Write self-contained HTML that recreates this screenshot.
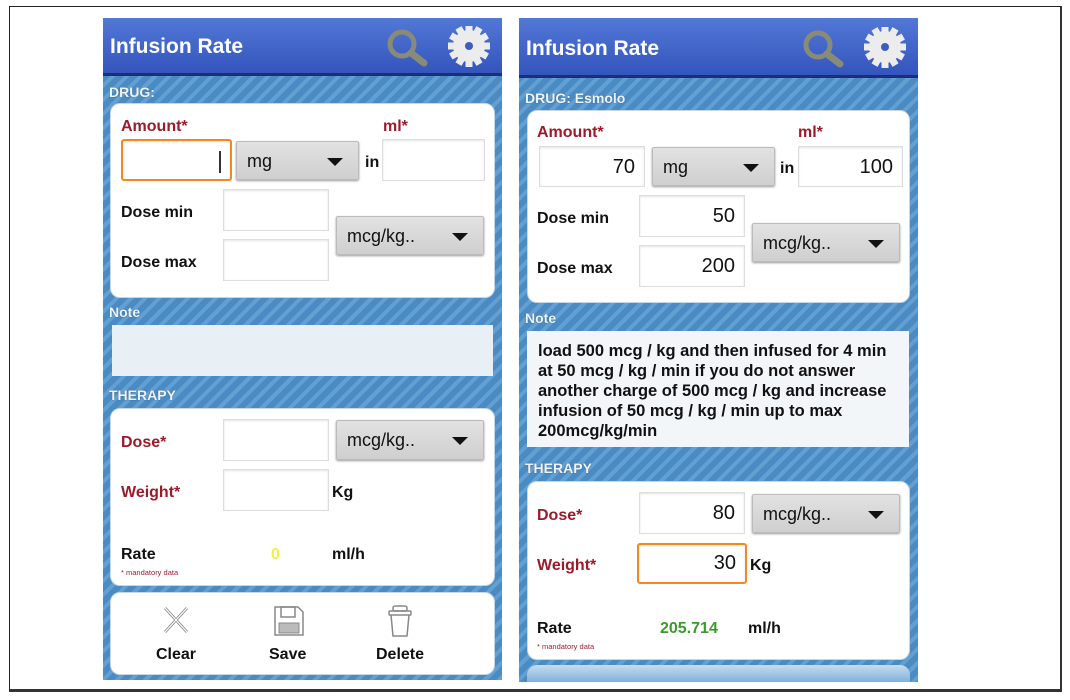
<!DOCTYPE html>
<html><head><meta charset="utf-8"><style>
*{margin:0;padding:0;box-sizing:border-box}
body{width:1070px;height:700px;background:#fff;position:relative;overflow:hidden;font-family:"Liberation Sans",Arial,sans-serif;font-weight:bold}
.a{position:absolute}
.frame{left:9px;top:6px;width:1053px;height:686px;border:1px solid #222;border-right:2px solid #333;border-bottom:3px solid #333}
.phone{background:repeating-linear-gradient(135deg,#4a8bc4 0 6px,#62a0d4 6px 10px)}
.hdr{background:linear-gradient(#5278d6,#3455bd);border-bottom:3px solid #1c2f75}
.hdr span{position:absolute;left:7px;top:17px;color:#fff;font-size:21px}
.sec{color:#eef4fb;font-size:14px;text-shadow:0 0 1px #345}
.card{background:#fff;border-radius:10px;border:1px solid #c8d6e3}
.lbl{font-size:16px;color:#111}
.red{color:#9b1b2a}
.inp{background:#fff;border:1px solid #ddd;box-shadow:inset 0 1px 2px #e4e4e4;font-size:20px;font-weight:normal;color:#111;text-align:right;padding-right:9px}
.dd{background:linear-gradient(#e2e2e2,#cfcfcf);border:1px solid #bbb;border-radius:2px;box-shadow:0 1px 2px #999;font-size:18px;font-weight:normal;color:#111;padding-left:10px}
.dd:after{content:"";position:absolute;right:15px;top:50%;margin-top:-3px;border-left:8px solid transparent;border-right:8px solid transparent;border-top:8px solid #111}
.orange{border:2px solid #f0891f;border-radius:3px}
.tiny{font-size:7.5px;color:#a01b2a;font-weight:normal}
</style></head><body>
<div class="a frame"></div>

<!-- LEFT PHONE -->
<div class="a phone" style="left:103px;top:18px;width:399px;height:662px"></div>
<div class="a hdr" style="left:103px;top:18px;width:399px;height:58px"><span>Infusion Rate</span>
<svg class="a" style="left:278px;top:8px" width="115" height="44" viewBox="0 0 115 44">
<circle cx="21" cy="18" r="12" fill="none" stroke="#8a8a78" stroke-width="5"/>
<line x1="30" y1="27" x2="43" y2="37" stroke="#8a8a78" stroke-width="7" stroke-linecap="round"/>
<g transform="translate(88,20)" fill="#ececec"><circle r="16"/>
<g><rect x="-3.5" y="-21" width="7" height="8"/><rect x="-3.5" y="-21" width="7" height="8" transform="rotate(30)"/><rect x="-3.5" y="-21" width="7" height="8" transform="rotate(60)"/><rect x="-3.5" y="-21" width="7" height="8" transform="rotate(90)"/><rect x="-3.5" y="-21" width="7" height="8" transform="rotate(120)"/><rect x="-3.5" y="-21" width="7" height="8" transform="rotate(150)"/><rect x="-3.5" y="-21" width="7" height="8" transform="rotate(180)"/><rect x="-3.5" y="-21" width="7" height="8" transform="rotate(210)"/><rect x="-3.5" y="-21" width="7" height="8" transform="rotate(240)"/><rect x="-3.5" y="-21" width="7" height="8" transform="rotate(270)"/><rect x="-3.5" y="-21" width="7" height="8" transform="rotate(300)"/><rect x="-3.5" y="-21" width="7" height="8" transform="rotate(330)"/></g>
<circle r="4" fill="#3b5cc0"/></g></svg></div>
<div class="a sec" style="left:109px;top:84px">DRUG:</div>
<div class="a card" style="left:110px;top:103px;width:385px;height:195px"></div>
<div class="a lbl red" style="left:121px;top:118px">Amount*</div>
<div class="a lbl red" style="left:383px;top:118px">ml*</div>
<div class="a inp orange" style="left:121px;top:139px;width:111px;height:42px"><div class="a" style="left:96px;top:10px;width:2px;height:22px;background:#333"></div></div>
<div class="a dd" style="left:236px;top:141px;width:123px;height:39px;line-height:38px">mg</div>
<div class="a lbl" style="left:365px;top:154px">in</div>
<div class="a inp" style="left:382px;top:139px;width:103px;height:42px"></div>
<div class="a lbl" style="left:121px;top:204px">Dose min</div>
<div class="a inp" style="left:223px;top:189px;width:106px;height:42px"></div>
<div class="a lbl" style="left:121px;top:254px">Dose max</div>
<div class="a inp" style="left:223px;top:239px;width:106px;height:42px"></div>
<div class="a dd" style="left:336px;top:216px;width:148px;height:39px;line-height:38px">mcg/kg..</div>
<div class="a sec" style="left:109px;top:304px">Note</div>
<div class="a" style="left:112px;top:325px;width:381px;height:51px;background:#e8f0f6"></div>
<div class="a sec" style="left:109px;top:387px">THERAPY</div>
<div class="a card" style="left:110px;top:408px;width:385px;height:178px"></div>
<div class="a lbl red" style="left:121px;top:434px">Dose*</div>
<div class="a inp" style="left:223px;top:419px;width:106px;height:42px"></div>
<div class="a dd" style="left:336px;top:420px;width:148px;height:40px;line-height:39px">mcg/kg..</div>
<div class="a lbl red" style="left:121px;top:484px">Weight*</div>
<div class="a inp" style="left:223px;top:469px;width:106px;height:42px"></div>
<div class="a lbl" style="left:332px;top:484px">Kg</div>
<div class="a lbl" style="left:121px;top:546px">Rate</div>
<div class="a tiny" style="left:121px;top:568px">* mandatory data</div>
<div class="a lbl" style="left:271px;top:546px;color:#f2f23a">0</div>
<div class="a lbl" style="left:332px;top:546px">ml/h</div>
<div class="a card" style="left:110px;top:592px;width:385px;height:83px"></div>
<svg class="a" style="left:163px;top:606px" width="26" height="28"><path d="M2 2L24 26M24 2L2 26" stroke="#999" stroke-width="3"/><path d="M2 2L24 26M24 2L2 26" stroke="#fff" stroke-width="1"/></svg>
<svg class="a" style="left:273px;top:605px" width="32" height="32"><path d="M2 2H25L30 7V30H2Z" fill="#fff" stroke="#888" stroke-width="1.5"/><rect x="8" y="2" width="14" height="10" fill="none" stroke="#888" stroke-width="1.5"/><rect x="6" y="18" width="20" height="10" fill="#bbb" stroke="#888"/></svg>
<svg class="a" style="left:388px;top:604px" width="24" height="34"><rect x="5" y="2" width="14" height="5" rx="2" fill="none" stroke="#888" stroke-width="1.5"/><rect x="1" y="7" width="22" height="4" rx="1" fill="none" stroke="#888" stroke-width="1.5"/><path d="M3 11L5 32H19L21 11" fill="none" stroke="#888" stroke-width="1.5"/></svg>
<div class="a lbl" style="left:156px;top:646px">Clear</div>
<div class="a lbl" style="left:269px;top:646px">Save</div>
<div class="a lbl" style="left:376px;top:646px">Delete</div>

<!-- RIGHT PHONE -->
<div class="a phone" style="left:519px;top:18px;width:399px;height:664px"></div>
<div class="a hdr" style="left:519px;top:18px;width:399px;height:60px"><span style="top:19px">Infusion Rate</span>
<svg class="a" style="left:278px;top:9px" width="115" height="44" viewBox="0 0 115 44">
<circle cx="21" cy="18" r="12" fill="none" stroke="#8a8a78" stroke-width="5"/>
<line x1="30" y1="27" x2="43" y2="37" stroke="#8a8a78" stroke-width="7" stroke-linecap="round"/>
<g transform="translate(88,20)" fill="#ececec"><circle r="16"/>
<g><rect x="-3.5" y="-21" width="7" height="8"/><rect x="-3.5" y="-21" width="7" height="8" transform="rotate(30)"/><rect x="-3.5" y="-21" width="7" height="8" transform="rotate(60)"/><rect x="-3.5" y="-21" width="7" height="8" transform="rotate(90)"/><rect x="-3.5" y="-21" width="7" height="8" transform="rotate(120)"/><rect x="-3.5" y="-21" width="7" height="8" transform="rotate(150)"/><rect x="-3.5" y="-21" width="7" height="8" transform="rotate(180)"/><rect x="-3.5" y="-21" width="7" height="8" transform="rotate(210)"/><rect x="-3.5" y="-21" width="7" height="8" transform="rotate(240)"/><rect x="-3.5" y="-21" width="7" height="8" transform="rotate(270)"/><rect x="-3.5" y="-21" width="7" height="8" transform="rotate(300)"/><rect x="-3.5" y="-21" width="7" height="8" transform="rotate(330)"/></g>
<circle r="4" fill="#3b5cc0"/></g></svg></div>
<div class="a sec" style="left:525px;top:90px">DRUG: Esmolo</div>
<div class="a card" style="left:527px;top:110px;width:383px;height:193px"></div>
<div class="a lbl red" style="left:537px;top:124px">Amount*</div>
<div class="a lbl red" style="left:798px;top:124px">ml*</div>
<div class="a inp" style="left:539px;top:146px;width:106px;height:41px;line-height:40px">70</div>
<div class="a dd" style="left:652px;top:147px;width:123px;height:39px;line-height:38px">mg</div>
<div class="a lbl" style="left:780px;top:160px">in</div>
<div class="a inp" style="left:798px;top:146px;width:105px;height:41px;line-height:40px">100</div>
<div class="a lbl" style="left:537px;top:210px">Dose min</div>
<div class="a inp" style="left:639px;top:195px;width:106px;height:42px;line-height:41px">50</div>
<div class="a lbl" style="left:537px;top:260px">Dose max</div>
<div class="a inp" style="left:639px;top:245px;width:106px;height:42px;line-height:41px">200</div>
<div class="a dd" style="left:752px;top:223px;width:148px;height:39px;line-height:38px">mcg/kg..</div>
<div class="a sec" style="left:525px;top:310px">Note</div>
<div class="a" style="left:527px;top:331px;width:382px;height:116px;background:#f2f6f9"></div>
<div class="a" style="left:538px;top:341px;font-size:16.5px;line-height:20px;color:#111">load 500 mcg / kg and then infused for 4 min<br>at 50 mcg / kg / min if you do not answer<br>another charge of 500 mcg / kg and increase<br>infusion of 50 mcg / kg / min up to max<br>200mcg/kg/min</div>
<div class="a sec" style="left:525px;top:460px">THERAPY</div>
<div class="a card" style="left:527px;top:481px;width:383px;height:179px"></div>
<div class="a lbl red" style="left:537px;top:507px">Dose*</div>
<div class="a inp" style="left:639px;top:492px;width:106px;height:42px;line-height:41px">80</div>
<div class="a dd" style="left:752px;top:494px;width:148px;height:39px;line-height:38px">mcg/kg..</div>
<div class="a lbl red" style="left:537px;top:557px">Weight*</div>
<div class="a inp orange" style="left:637px;top:543px;width:110px;height:41px;line-height:37px">30</div>
<div class="a lbl" style="left:750px;top:557px">Kg</div>
<div class="a lbl" style="left:537px;top:620px">Rate</div>
<div class="a tiny" style="left:537px;top:642px">* mandatory data</div>
<div class="a lbl" style="left:660px;top:620px;color:#3c9a2a">205.714</div>
<div class="a lbl" style="left:748px;top:620px">ml/h</div>
<div class="a" style="left:527px;top:665px;width:383px;height:17px;border-radius:10px 10px 0 0;background:linear-gradient(#c8dcee,#7fb0dc)"></div>
</body></html>
